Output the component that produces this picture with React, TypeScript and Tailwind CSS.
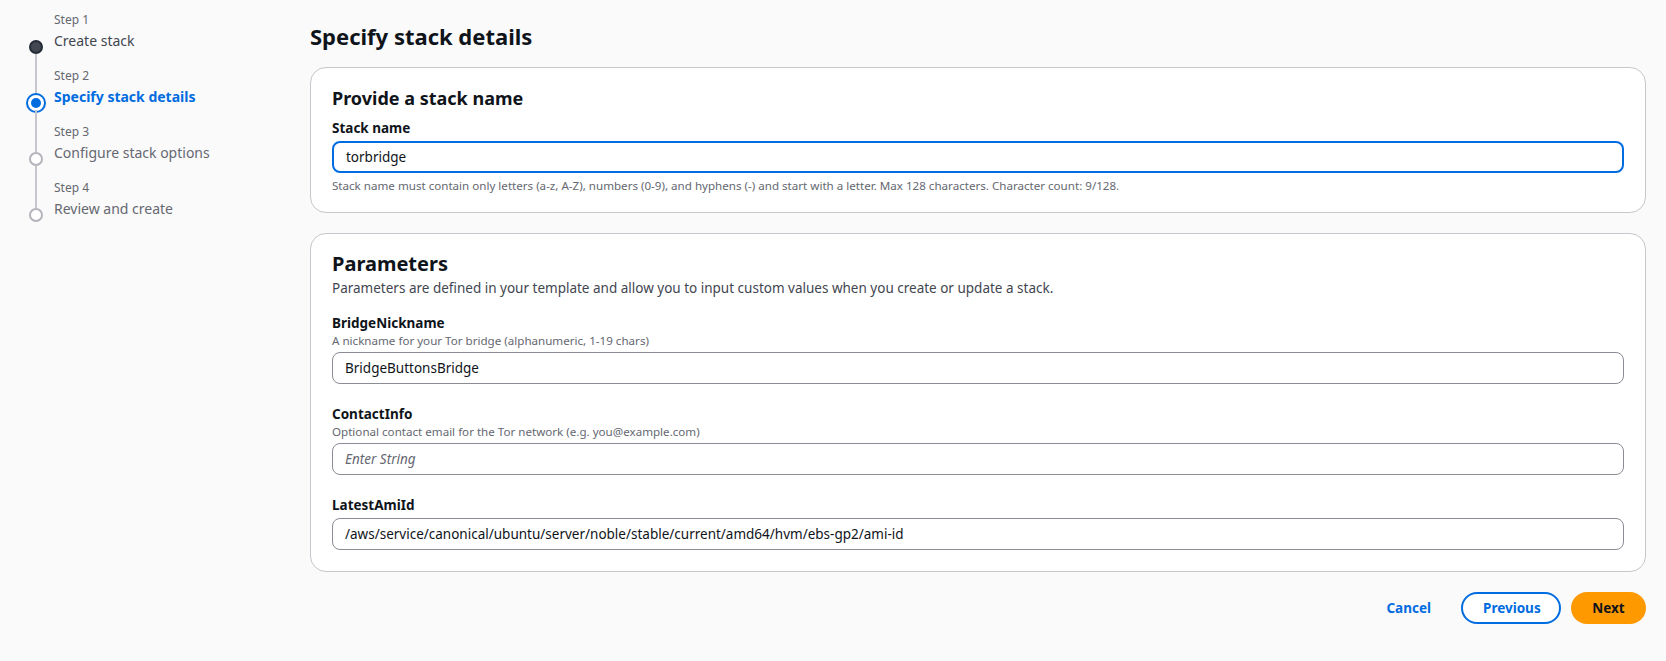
const steps = [
  { n: 1, label: "Create stack", state: "done" },
  { n: 2, label: "Specify stack details", state: "active" },
  { n: 3, label: "Configure stack options", state: "todo" },
  { n: 4, label: "Review and create", state: "todo" },
];

function Field({ label, hint, value, placeholder, focused }: { label: string; hint?: string; value?: string; placeholder?: string; focused?: boolean }) {
  return (
    <div>
      <div className="text-[13.5px] font-bold leading-[20px] text-[#0f141a]">{label}</div>
      {hint && <div className="text-[11.6px] leading-[16px] text-[#656871]">{hint}</div>}
      <div
        className={`mt-[3px] h-[32px] rounded-[8px] bg-white px-[12px] flex items-center text-[13.5px] ${
          focused ? "border-2 border-[#006ce0] px-[11px]" : "border border-[#8c8c94]"
        }`}
      >
        {value ? <span className="text-[#0f141a]">{value}</span> : <span className="italic text-[#656871]">{placeholder}</span>}
      </div>
    </div>
  );
}

export default function App() {
  return (
    <div className="min-h-[661px] bg-[#fafafa] flex font-['Noto_Sans',sans-serif] text-[#0f141a]">
      <aside className="w-[310px] shrink-0 pl-[24px] pt-[12px]">
        {steps.map((s, i) => (
          <div key={s.n} className="flex">
            <div className="w-[24px] flex flex-col items-center">
              <div className={`h-[28px] w-[2px] ${i > 0 ? "bg-[#c6c6cd]" : ""}`} />
              {s.state === "done" && <div className="h-[14px] w-[14px] rounded-full bg-[#424650] border-2 border-[#232b37]" />}
              {s.state === "active" && (
                <div className="h-[20px] w-[20px] -my-[3px] rounded-full border-2 border-[#006ce0] flex items-center justify-center bg-white">
                  <div className="h-[10px] w-[10px] rounded-full bg-[#006ce0]" />
                </div>
              )}
              {s.state === "todo" && <div className="h-[14px] w-[14px] rounded-full border-2 border-[#b4b4bb] bg-white" />}
              <div className={`w-[2px] flex-1 ${i < steps.length - 1 ? "bg-[#c6c6cd]" : ""}`} />
            </div>
            <div className="pl-[6px] pb-[14px]">
              <div className="text-[12px] leading-[16px] text-[#656871]">Step {s.n}</div>
              <div
                className={`text-[14px] leading-[26px] ${
                  s.state === "active" ? "font-bold text-[#006ce0]" : s.state === "done" ? "text-[#424650]" : "text-[#656871]"
                }`}
              >
                {s.label}
              </div>
            </div>
          </div>
        ))}
      </aside>
      <main className="flex-1 pr-[20px] pt-[20px]">
        <h1 className="text-[22px] font-bold leading-[32px] mb-[15px]">Specify stack details</h1>
        <section className="rounded-[16px] border border-[#c6c6cd] bg-white px-[21px] pt-[16px] pb-[18px]">
          <h2 className="text-[18px] font-bold leading-[28px] mb-[6px]">Provide a stack name</h2>
          <Field label="Stack name" value="torbridge" focused />
          <div className="mt-[5px] text-[11.6px] leading-[16px] text-[#656871]">
            Stack name must contain only letters (a-z, A-Z), numbers (0-9), and hyphens (-) and start with a letter. Max 128 characters. Character count: 9/128.
          </div>
        </section>
        <section className="mt-[20px] rounded-[16px] border border-[#c6c6cd] bg-white px-[21px] pt-[16px] pb-[21px]">
          <h2 className="text-[20px] font-bold leading-[28px]">Parameters</h2>
          <p className="text-[13.5px] leading-[20px] text-[#424650]">
            Parameters are defined in your template and allow you to input custom values when you create or update a stack.
          </p>
          <div className="mt-[15px] flex flex-col gap-[20px]">
            <Field label="BridgeNickname" hint="A nickname for your Tor bridge (alphanumeric, 1-19 chars)" value="BridgeButtonsBridge" />
            <Field label="ContactInfo" hint="Optional contact email for the Tor network (e.g. you@example.com)" placeholder="Enter String" />
            <Field label="LatestAmiId" value="/aws/service/canonical/ubuntu/server/noble/stable/current/amd64/hvm/ebs-gp2/ami-id" />
          </div>
        </section>
        <div className="mt-[20px] flex items-center justify-end gap-[10px]">
          <button className="px-[20px] h-[32px] text-[13.5px] font-bold text-[#006ce0]">Cancel</button>
          <button className="px-[20px] h-[32px] w-[100px] rounded-full border-2 border-[#006ce0] bg-white text-[13.5px] font-bold text-[#006ce0]">
            Previous
          </button>
          <button className="h-[32px] w-[75px] rounded-full bg-[#ff9900] text-[13.5px] font-bold text-[#0f141a]">Next</button>
        </div>
      </main>
    </div>
  );
}
